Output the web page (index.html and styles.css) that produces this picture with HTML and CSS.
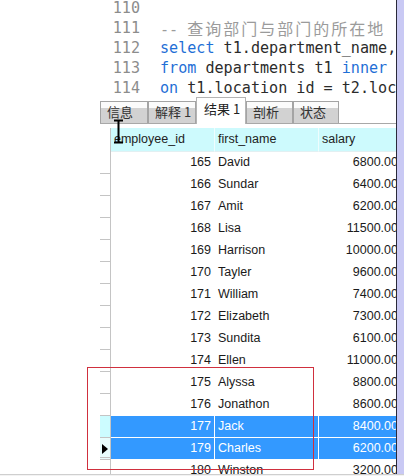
FILE: index.html
```html
<!DOCTYPE html>
<html>
<head>
<meta charset="utf-8">
<link rel="stylesheet" href="styles.css">
</head>
<body>
<div class="screen">
  <div class="body">
    <div class="main">
      <div class="editor">
        <div class="line"><span class="ln">110</span><span class="code"></span></div>
        <div class="line"><span class="ln">111</span><span class="code cm">-- <span class="cjk">查询部门与部门的所在地</span></span></div>
        <div class="line"><span class="ln">112</span><span class="code"><span class="kw">select</span> t1.department_name,t2.city</span></div>
        <div class="line"><span class="ln">113</span><span class="code"><span class="kw">from</span> departments t1 <span class="kw">inner</span> join</span></div>
        <div class="line"><span class="ln">114</span><span class="code"><span class="kw">on</span> t1.location_id = t2.location_id</span></div>
      </div>
      <div class="panel">
        <div class="tabs">
          <div class="tab w48">信息</div>
          <div class="tab w48">解释 1</div>
          <div class="tab active w50">结果 1</div>
          <div class="tab w47">剖析</div>
          <div class="tab w46">状态</div>
        </div>
        <div class="grid">
          <div class="row head"><div class="ind"></div><div class="c">employee_id</div><div class="c">first_name</div><div class="c">salary</div></div>
          <div class="row"><div class="ind"></div><div class="c num">165</div><div class="c">David</div><div class="c num">6800.00</div></div>
          <div class="row"><div class="ind"></div><div class="c num">166</div><div class="c">Sundar</div><div class="c num">6400.00</div></div>
          <div class="row"><div class="ind"></div><div class="c num">167</div><div class="c">Amit</div><div class="c num">6200.00</div></div>
          <div class="row"><div class="ind"></div><div class="c num">168</div><div class="c">Lisa</div><div class="c num">11500.00</div></div>
          <div class="row"><div class="ind"></div><div class="c num">169</div><div class="c">Harrison</div><div class="c num">10000.00</div></div>
          <div class="row"><div class="ind"></div><div class="c num">170</div><div class="c">Tayler</div><div class="c num">9600.00</div></div>
          <div class="row"><div class="ind"></div><div class="c num">171</div><div class="c">William</div><div class="c num">7400.00</div></div>
          <div class="row"><div class="ind"></div><div class="c num">172</div><div class="c">Elizabeth</div><div class="c num">7300.00</div></div>
          <div class="row"><div class="ind"></div><div class="c num">173</div><div class="c">Sundita</div><div class="c num">6100.00</div></div>
          <div class="row"><div class="ind"></div><div class="c num">174</div><div class="c">Ellen</div><div class="c num">11000.00</div></div>
          <div class="row"><div class="ind"></div><div class="c num">175</div><div class="c">Alyssa</div><div class="c num">8800.00</div></div>
          <div class="row"><div class="ind"></div><div class="c num">176</div><div class="c">Jonathon</div><div class="c num">8600.00</div></div>
          <div class="row sel"><div class="ind"></div><div class="c num">177</div><div class="c">Jack</div><div class="c num">8400.00</div></div>
          <div class="row sel cur"><div class="ind"><span class="arrow"></span></div><div class="c num">179</div><div class="c">Charles</div><div class="c num">6200.00</div></div>
          <div class="row"><div class="ind"></div><div class="c num">180</div><div class="c">Winston</div><div class="c num">3200.00</div></div>
        </div>
      </div>
    </div>
    <div class="strip"></div>
  </div>
  <div class="foot"></div>
  <div class="mark"></div>
  <svg class="ibeam" width="12" height="26" viewBox="0 0 12 26">
    <path d="M1 1.5H10M5.5 1.5V23.5M1 23.5H10" stroke="#000" stroke-width="2" fill="none"/>
  </svg>
</div>
</body>
</html>
```

FILE: styles.css
```css
html, body {
  margin: 0;
  padding: 0;
  background: #fff;
  overflow: hidden;
}
.screen {
  position: relative;
  width: 404px;
  height: 476px;
  display: flex;
  flex-direction: column;
  overflow: hidden;
}
.body {
  height: 474px;
  flex: none;
  display: flex;
  overflow: hidden;
}
.main {
  width: 296px;
  flex: none;
  padding-left: 100px;
  border-right: 1px solid #2a2a3a;
  overflow: hidden;
  display: flex;
  flex-direction: column;
}
.strip {
  flex: 1;
  background: #c9c9f4;
}
.foot {
  height: 1px;
  flex: none;
  border-top: 1px solid #cfcfcf;
  background: #f3f3f3;
}
.editor {
  flex: none;
  margin-top: -2px;
  height: 97px;
  overflow: hidden;
  font-family: "DejaVu Sans Mono", "Liberation Mono", monospace;
  font-size: 15.1px;
  color: #2b2b2b;
}
.line {
  display: flex;
  height: 20px;
  line-height: 20px;
  white-space: pre;
}
.ln {
  width: 40px;
  flex: none;
  text-align: right;
  color: #8c8c8c;
}
.code {
  padding-left: 20px;
  white-space: pre;
}
.kw { color: #1f6fd6; }
.cm { color: #9b9b9b; }
.cjk {
  font-family: "Noto Sans CJK SC", sans-serif;
  font-size: 16px;
  letter-spacing: 2px;
}
.panel {
  flex: none;
  display: flex;
  flex-direction: column;
}
.tabs {
  flex: none;
  height: 28px;
  display: flex;
  align-items: flex-end;
  border-bottom: 1px solid #a8a8a8;
  font-family: "Noto Sans CJK SC", sans-serif;
  font-size: 13px;
  color: #333;
}
.tab {
  box-sizing: border-box;
  height: 22px;
  line-height: 20px;
  padding-left: 6px;
  border: 1px solid #a4a4a4;
  border-bottom: none;
  background: linear-gradient(#fbfbfb 0 6px, #d2d2d2 6px);
  white-space: nowrap;
}
.tab.active {
  height: 27px;
  line-height: 21px;
  padding-left: 7px;
  margin-bottom: -1px;
  background: #fff;
  border-color: #b4b4b4;
  color: #222;
}
.w48 { width: 48px; }
.w50 { width: 50px; }
.w47 { width: 47px; }
.w46 { width: 46px; }
.grid {
  flex: none;
  margin-top: 4px;
  width: 303px;
  font-family: "Liberation Sans", Arial, sans-serif;
  font-size: 12.5px;
  color: #1a1a1a;
}
.row {
  display: grid;
  grid-template-columns: 11px 104px 104px 84px;
  height: 22px;
}
.row.head {
  height: 24px;
}
.ind {
  box-sizing: border-box;
  border-right: 1px solid #c4c4c4;
  border-bottom: 1px solid #c4c4c4;
  position: relative;
}
.head .ind {
  border-bottom: none;
}
.c {
  box-sizing: border-box;
  border-right: 1px solid #fff;
  border-bottom: 1px solid #fff;
  padding: 0 3px 0 3px;
  line-height: 21px;
  white-space: nowrap;
  overflow: hidden;
}
.c.num {
  text-align: right;
}
.c:last-child {
  padding-right: 4px;
}
.head .c {
  background: #cdfafd;
  border-right-color: #eefdfe;
  border-bottom: 1px solid #e2f0f2;
  line-height: 23px;
  color: #222;
  padding-left: 3px;
}
.sel .c {
  background: #3399ff;
  color: #fff;
}
.sel .ind {
  background: #ccfcff;
}
.cur .ind {
  background: #e8fdfd;
  border-bottom: 3px double #c4c4c4;
}
.arrow {
  position: absolute;
  left: 2px;
  top: 6px;
  width: 0;
  height: 0;
  border-top: 5px solid transparent;
  border-bottom: 5px solid transparent;
  border-left: 6px solid #000;
}
.mark {
  position: absolute;
  left: 87px;
  top: 367px;
  width: 225px;
  height: 101px;
  border: 1px solid #d0303e;
}
.ibeam {
  position: absolute;
  left: 113px;
  top: 119px;
}
```
